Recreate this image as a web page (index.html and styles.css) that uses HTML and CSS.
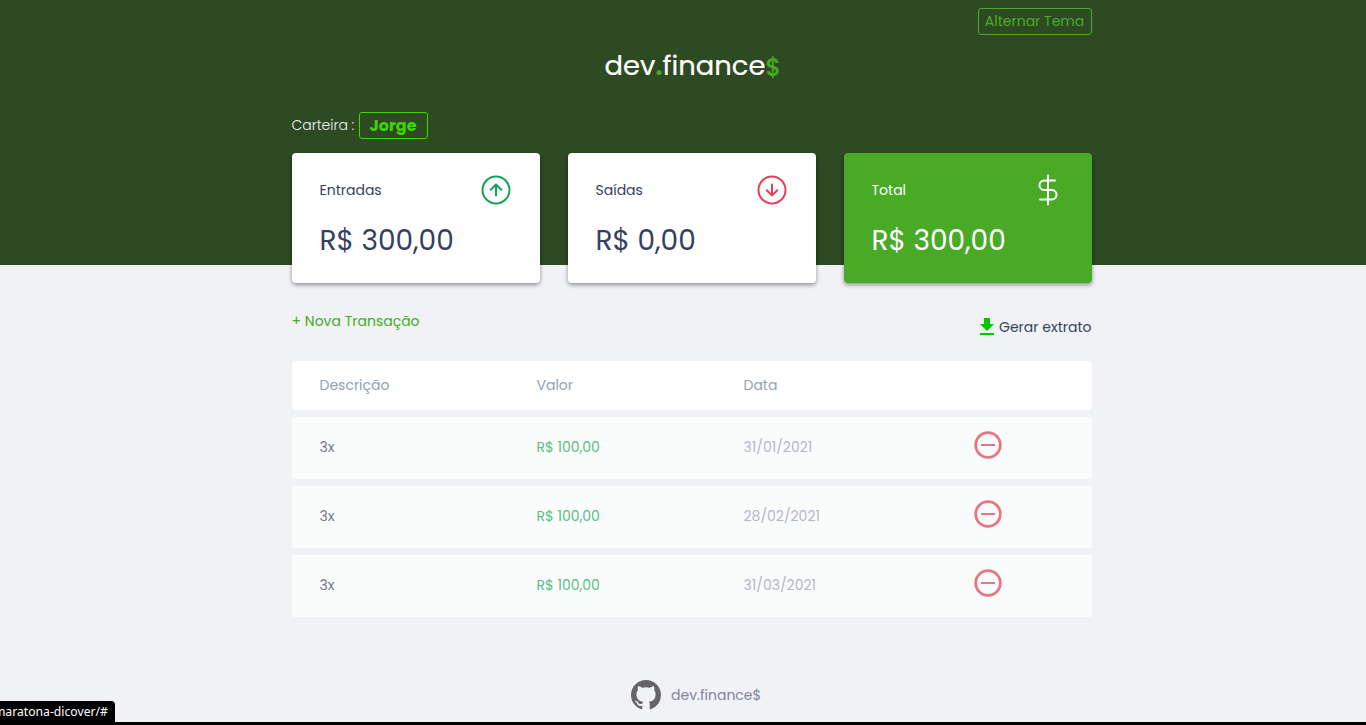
FILE: index.html
```html
<!DOCTYPE html>
<html lang="pt-br">
<head>
<meta charset="utf-8">
<title>dev.finance$</title>
<link rel="stylesheet" href="styles.css">
</head>
<body>
<header class="header">
  <div class="container topbar"><button class="theme">Alternar Tema</button></div>
  <h1 class="logo"><span class="logo-name">dev<span class="accent dot">.</span>finance</span><span class="accent dollar">$</span></h1>
  <div class="container wallet"><span class="wallet-label">Carteira :</span><span class="wallet-name">Jorge</span></div>
</header>
<main class="container">
  <section class="cards">
    <article class="card">
      <h3><span>Entradas</span>
        <svg class="card-icon" viewBox="0 0 32 32" fill="none" stroke="#12a454" stroke-width="2" stroke-linecap="round" stroke-linejoin="round"><circle cx="16" cy="16" r="13.5"/><path d="M16 21.5V10.5M10.7 15.8L16 10.5l5.3 5.3"/></svg>
      </h3>
      <p>R$ 300,00</p>
    </article>
    <article class="card">
      <h3><span>Saídas</span>
        <svg class="card-icon" viewBox="0 0 32 32" fill="none" stroke="#e83f5b" stroke-width="2" stroke-linecap="round" stroke-linejoin="round"><circle cx="16" cy="16" r="13.5"/><path d="M16 10.5v11M10.7 16.2l5.3 5.3 5.3-5.3"/></svg>
      </h3>
      <p>R$ 0,00</p>
    </article>
    <article class="card total">
      <h3><span>Total</span>
        <svg class="card-icon" viewBox="0 0 32 32" fill="none" stroke="#fff" stroke-width="2" stroke-linecap="round" stroke-linejoin="round"><path d="M16 1.5v29M23 6.5H12.2a4.7 4.7 0 0 0 0 9.5h7.6a4.7 4.7 0 0 1 0 9.5H8"/></svg>
      </h3>
      <p>R$ 300,00</p>
    </article>
  </section>
  <div class="actions">
    <a class="new">+ Nova Transação</a>
    <a class="extract"><svg viewBox="0 0 14 17" fill="#00c800"><path d="M4 0h6v6h4l-7 7-7-7h4zM0 15h14v2H0z"/></svg><span>Gerar extrato</span></a>
  </div>
  <section class="table">
    <div class="row head"><span>Descrição</span><span>Valor</span><span>Data</span></div>
    <div class="row"><span class="desc">3x</span><span class="value">R$ 100,00</span><span class="date">31/01/2021</span><svg class="minus" viewBox="0 0 28 28" fill="none" stroke="#e97584"><circle cx="14" cy="14" r="12.3" stroke-width="2.8"/><path d="M7 14h14" stroke-width="2"/></svg></div>
    <div class="row"><span class="desc">3x</span><span class="value">R$ 100,00</span><span class="date">28/02/2021</span><svg class="minus" viewBox="0 0 28 28" fill="none" stroke="#e97584"><circle cx="14" cy="14" r="12.3" stroke-width="2.8"/><path d="M7 14h14" stroke-width="2"/></svg></div>
    <div class="row"><span class="desc">3x</span><span class="value">R$ 100,00</span><span class="date">31/03/2021</span><svg class="minus" viewBox="0 0 28 28" fill="none" stroke="#e97584"><circle cx="14" cy="14" r="12.3" stroke-width="2.8"/><path d="M7 14h14" stroke-width="2"/></svg></div>
  </section>
</main>
<footer class="footer">
  <svg viewBox="0 0 16 16" fill="#666669"><path d="M8 0C3.58 0 0 3.58 0 8c0 3.54 2.29 6.53 5.47 7.59.4.07.55-.17.55-.38 0-.19-.01-.82-.01-1.49-2.01.37-2.53-.49-2.69-.94-.09-.23-.48-.94-.82-1.13-.28-.15-.68-.52-.01-.53.63-.01 1.08.58 1.23.82.72 1.21 1.87.87 2.33.66.07-.52.28-.87.51-1.07-1.78-.2-3.64-.89-3.64-3.95 0-.87.31-1.59.82-2.15-.08-.2-.36-1.02.08-2.12 0 0 .67-.21 2.2.82.64-.18 1.32-.27 2-.27s1.36.09 2 .27c1.53-1.04 2.2-.82 2.2-.82.44 1.1.16 1.92.08 2.12.51.56.82 1.27.82 2.15 0 3.07-1.87 3.75-3.65 3.95.29.25.54.73.54 1.48 0 1.07-.01 1.93-.01 2.2 0 .21.15.46.55.38A8.01 8.01 0 0 0 16 8c0-4.42-3.58-8-8-8z"/></svg>
  <span>dev.finance$</span>
</footer>
<div class="status"><span>maratona-dicover/#</span></div>
<div class="edge"></div>
</body>
</html>
```
FILE: styles.css
```css
* { box-sizing: border-box; margin: 0; padding: 0; }
body {
  position: relative;
  height: 725px;
  overflow: hidden;
  background: #f0f2f5;
  color: #363f5f;
  font-family: Poppins, sans-serif;
  font-size: 14px;
  white-space: nowrap;
}
.container { width: 800px; margin-left: 291.5px; }
.header { height: 265px; padding-top: 8px; background: #2d4a22; }
.topbar { display: flex; justify-content: flex-end; height: 27px; }
.theme {
  width: 114px;
  height: 27px;
  border: 1px solid #49aa26;
  border-radius: 3px;
  background: none;
  color: #49aa26;
  font: inherit;
}
.logo {
  display: flex;
  align-items: center;
  height: 62px;
  margin-left: 604.5px;
  color: #fff;
  font-size: 27.4px;
  font-weight: 400;
  -webkit-text-stroke: 0.2px;
}
.accent { color: #49aa26; }
.dot { font-weight: 600; }
.dollar { font-size: 24px; font-weight: 500; padding-top: 2px; }
.wallet { display: flex; align-items: center; height: 27px; margin-top: 15px; }
.wallet-label { width: 67px; color: #f0f2f5; font-weight: 300; letter-spacing: -0.05px; }
.wallet-name {
  width: 69px;
  height: 27px;
  border: 1px solid #3dd705;
  border-radius: 3px;
  color: #3dd705;
  font-size: 16px;
  font-weight: 700;
  line-height: 25px;
  text-align: center;
}
.cards { display: grid; grid-template-columns: repeat(3, 248px); gap: 28px; margin-top: -112px; }
.card {
  height: 130px;
  padding: 21px 28px;
  border-radius: 4px;
  background: #fff;
  box-shadow: 0 2px 4px rgba(0, 0, 0, 0.4);
}
.card h3 { display: flex; justify-content: space-between; align-items: center; height: 32px; font-size: 14px; font-weight: 400; }
.card-icon { width: 32px; height: 32px; }
.card p { margin-top: 14px; font-size: 28px; line-height: 42px; }
.total { background: #49aa26; color: #fff; }
.actions { display: flex; justify-content: space-between; height: 78px; padding-top: 28px; line-height: 20px; }
.new { color: #49aa26; }
.extract { display: flex; gap: 5px; padding-top: 6px; }
.extract svg { width: 14px; height: 17px; margin-top: 1px; }
.table { display: grid; gap: 7px; }
.row {
  display: grid;
  grid-template-columns: 217px 207px 230.5px 28px;
  align-items: center;
  height: 62px;
  padding: 0 27px 1px 28px;
  background: #fafcfb;
}
.head { height: 49px; padding-bottom: 0; border-radius: 4px; background: #fff; color: #92a2b5; }
.desc { color: #71778e; }
.value { color: #58bd87; }
.date { color: #b3b7c5; }
.minus { width: 28px; height: 28px; margin-bottom: 5px; }
.footer { display: flex; align-items: center; gap: 10px; height: 30px; margin: 63px 0 0 631px; color: #7f869d; }
.footer svg { width: 30px; height: 30px; }
.status {
  position: absolute;
  left: 0;
  bottom: 3px;
  display: flex;
  justify-content: flex-end;
  width: 115px;
  height: 21px;
  padding-right: 7px;
  border-radius: 0 4px 0 0;
  overflow: hidden;
  background: #000;
  color: #fff;
  font: 12.2px/21px "Noto Sans", sans-serif;
}
.edge { position: absolute; left: 0; bottom: 0; width: 100%; height: 3px; background: #000; }
```
